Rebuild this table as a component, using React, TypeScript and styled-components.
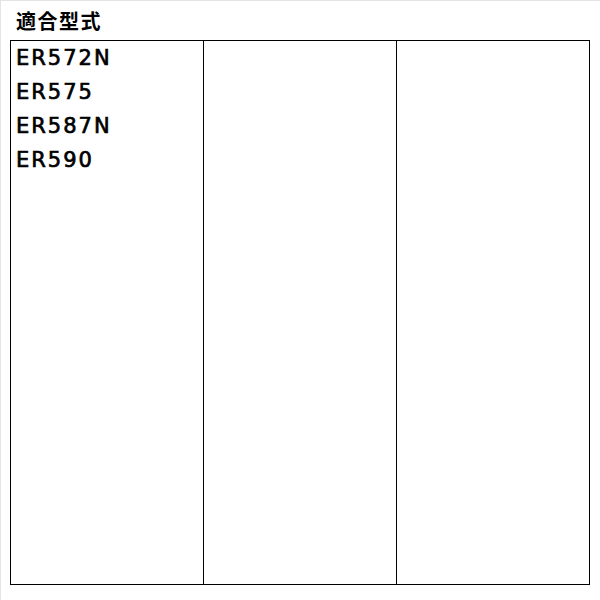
import { createGlobalStyle } from "styled-components"
import styled from "styled-components"

const GlobalStyle = createGlobalStyle`
  html, body {
    margin: 0;
    padding: 0;
    background: #ffffff;
  }
  body {
    font-family: "DejaVu Sans", "Noto Sans CJK JP", sans-serif;
    color: #000;
  }
`

const Page = styled.div`
  width: 600px;
  height: 600px;
  box-sizing: border-box;
  border-top: 1px solid #e4e4e4;
  border-left: 1px solid #e4e4e4;
  padding: 0 0 0 9px;
`

const Title = styled.h3`
  margin: 0;
  height: 39px;
  padding-left: 6px;
  display: flex;
  align-items: center;
  font-family: "Noto Sans CJK JP", sans-serif;
  font-size: 20px;
  font-weight: 700;
  letter-spacing: 1.5px;
`

const Table = styled.div`
  width: 580px;
  height: 545px;
  box-sizing: border-box;
  border: 1px solid #000;
  display: grid;
  grid-template-columns: 192px 193px 1fr;
`

const Cell = styled.div`
  padding: 0 5px;
  & + & {
    border-left: 1px solid #000;
  }
`

const Model = styled.div`
  font-family: "DejaVu Sans", sans-serif;
  font-size: 21px;
  line-height: 34px;
  letter-spacing: 2px;
  -webkit-text-stroke: 0.7px #000;
`

const models = ["ER572N", "ER575", "ER587N", "ER590"]

export default function App() {
  return (
    <>
      <GlobalStyle />
      <Page>
        <Title>適合型式</Title>
        <Table>
          <Cell>
            {models.map((m) => (
              <Model key={m}>{m}</Model>
            ))}
          </Cell>
          <Cell />
          <Cell />
        </Table>
      </Page>
    </>
  )
}
